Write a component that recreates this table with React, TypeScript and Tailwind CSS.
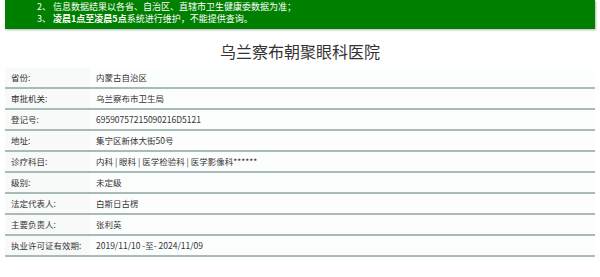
const rows: [string, string][] = [
  ['省份:', '内蒙古自治区'],
  ['审批机关:', '乌兰察布市卫生局'],
  ['登记号:', '69590757215090216D5121'],
  ['地址:', '集宁区新体大街50号'],
  ['诊疗科目:', '内科 | 眼科 | 医学检验科 | 医学影像科******'],
  ['级别:', '未定级'],
  ['法定代表人:', '白斯日古楞'],
  ['主要负责人:', '张利英'],
  ['执业许可证有效期:', '2019/11/10 -至- 2024/11/09'],
];

export default function App() {
  return (
    <div
      className="w-[600px] h-[277px] overflow-hidden bg-white text-[#333]"
      style={{ fontFamily: '"Noto Sans CJK SC", "Noto Sans", sans-serif' }}
    >
      {/* 提示横幅 */}
      <div className="mx-[5px] h-[29px] bg-[#008000] text-white text-[9px] leading-[11.5px] pl-[32px] pt-[1px] shadow-[1px_1px_2px_rgba(0,0,0,0.3)]">
        <div>2、 信息数据结果以各省、自治区、直辖市卫生健康委数据为准；</div>
        <div>
          3、 <span className="font-bold">凌晨1点至凌晨5点</span>系统进行维护，不能提供查询。
        </div>
      </div>

      <h1 className="text-center text-[16px] leading-[20px] mt-[12px] mb-[7px] text-[#333]">
        乌兰察布朝聚眼科医院
      </h1>

      <div className="mx-[5px]">
        {rows.map(([label, value]) => (
          <div key={label} className="flex h-[21px] border-b-2 border-[#a9bbb7] text-[8.5px] items-stretch">
            <div className="w-[85px] pl-[6px] flex items-center bg-[#f8f9f9]">{label}</div>
            <div className="flex-1 pl-[6px] flex items-center bg-[#fcfefe]">{value}</div>
          </div>
        ))}
      </div>
    </div>
  );
}
